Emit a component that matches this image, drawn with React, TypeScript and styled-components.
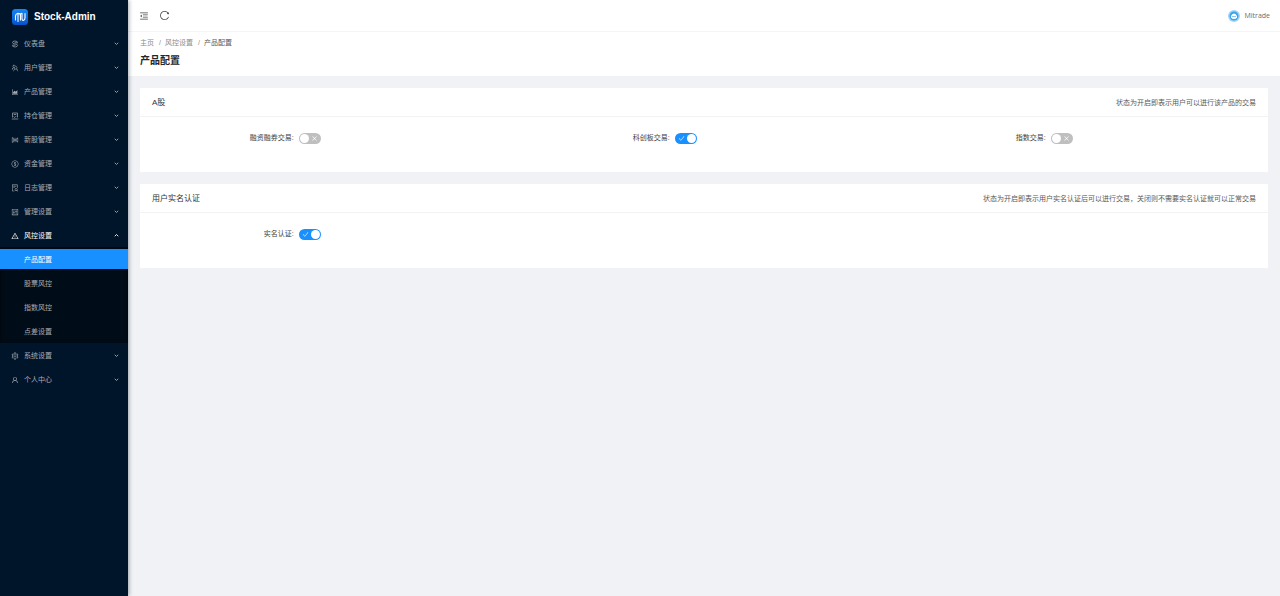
import React, { useState } from 'react';
import styled, { createGlobalStyle, css } from 'styled-components';
import {
  AiOutlineAreaChart,
  AiOutlineCheck,
  AiOutlineClose,
  AiOutlineControl,
  AiOutlineDollar,
  AiOutlineFileSearch,
  AiOutlineMenuFold,
  AiOutlineReload,
  AiOutlineSetting,
  AiOutlineSliders,
  AiOutlineTeam,
  AiOutlineUser,
  AiOutlineWarning,
} from 'react-icons/ai';
import type { IconType } from 'react-icons';

const GlobalStyle = createGlobalStyle`
  * { box-sizing: border-box; }
  body {
    margin: 0;
    background: #f0f2f5;
    color: #414141;
    font: 7px/12px "Liberation Sans", "Noto Sans CJK SC", sans-serif;
  }
  h1, h2, p, ul, ol { margin: 0; padding: 0; }
  ul, ol { list-style: none; }
  button { font: inherit; color: inherit; border: 0; padding: 0; background: none; cursor: pointer; }
  a { color: inherit; text-decoration: none; }
  svg { display: block; flex: none; }
`;

const Page = styled.div`
  display: flex;
  min-height: 100vh;
`;

const Sidebar = styled.aside`
  position: relative;
  flex: none;
  width: 128px;
  background: #001529;
  color: #a6adb4;
  box-shadow: 1px 0 4px rgba(0, 21, 41, 0.35);
`;

const Brand = styled.a`
  display: flex;
  align-items: center;
  gap: 6px;
  height: 31px;
  padding: 2px 0 0 12px;
  color: #fff;
  font-size: 10px;
  font-weight: 700;
`;

const MenuItem = styled.li`
  display: flow-root;
`;

const MenuButton = styled.button<{ $open?: boolean }>`
  display: flex;
  align-items: center;
  gap: 5px;
  width: 100%;
  height: 20px;
  margin: 2px 0;
  padding: 1px 9px 0 11px;
  text-align: left;
  ${({ $open }) => $open && css`color: #fff;`}
`;

const MenuLabel = styled.span`
  flex: 1;
`;

const SubMenu = styled.ul`
  background: #000c17;
  box-shadow: inset 0 1px 4px rgba(0, 0, 0, 0.45);
`;

const SubLink = styled.a<{ $active?: boolean }>`
  display: block;
  height: 20px;
  margin: 2px 0;
  padding: 1px 0 0 24px;
  line-height: 20px;
  ${({ $active }) => $active && css`background: #1890ff; color: #fff;`}
`;

const Main = styled.div`
  flex: 1;
  min-width: 0;
`;

const TopBar = styled.header`
  display: flex;
  align-items: center;
  gap: 10px;
  height: 32px;
  padding: 0 10px 0 11px;
  background: #fff;
  border-bottom: 1px solid #f4f5f7;
  color: #434343;
`;

const Account = styled.button`
  display: flex;
  align-items: center;
  gap: 4px;
  margin-left: auto;
`;

const UserName = styled.span`
  font-family: "Open Sans", sans-serif;
  color: #6b6b6b;
`;

const PageHeader = styled.div`
  height: 44px;
  padding: 5px 12px 0;
  background: #fff;
`;

const Crumbs = styled.ol`
  display: flex;
  color: #8c8c8c;
  li + li::before { content: "/"; margin: 0 4px 0 5px; }
  li:last-child { color: #595959; }
  li:last-child::before { color: #8c8c8c; }
`;

const Title = styled.h1`
  margin-top: 4px;
  font-size: 10px;
  line-height: 16px;
  font-weight: 700;
  color: #262626;
`;

const Content = styled.main`
  display: grid;
  gap: 12px;
  padding: 12px;
`;

const Card = styled.section`
  background: #fff;
  border-radius: 1px;
`;

const CardHead = styled.div`
  display: flex;
  align-items: center;
  justify-content: space-between;
  height: 29px;
  padding: 2px 12px 0;
  border-bottom: 1px solid #f3f3f4;
`;

const CardTitle = styled.h2`
  font-size: 8px;
  font-weight: 400;
  color: #333;
`;

const CardNote = styled.p`
  color: #595959;
`;

const CardBody = styled.div`
  display: grid;
  grid-template-columns: repeat(3, 1fr);
  gap: 24px;
  padding: 11px 12px 24px;
`;

const Field = styled.label`
  display: grid;
  grid-template-columns: 10fr 14fr;
  align-items: center;
  height: 20px;
`;

const FieldLabel = styled.span`
  padding-right: 5px;
  text-align: right;
  white-space: nowrap;
`;

const Track = styled.span<{ $on: boolean }>`
  position: relative;
  display: flex;
  align-items: center;
  justify-content: ${({ $on }) => ($on ? 'flex-start' : 'flex-end')};
  width: 22px;
  height: 11px;
  padding: 0 3px;
  border-radius: 6px;
  background: ${({ $on }) => ($on ? '#1890ff' : '#bfbfbf')};
  color: #fff;
  &::after {
    content: "";
    position: absolute;
    top: 1px;
    ${({ $on }) => ($on ? 'right' : 'left')}: 1px;
    width: 9px;
    height: 9px;
    border-radius: 50%;
    background: #fff;
  }
`;

const TrackInput = styled.input`
  position: absolute;
  inset: 0;
  width: 100%;
  height: 100%;
  margin: 0;
  opacity: 0;
  cursor: pointer;
`;

interface MenuEntry {
  label: string;
  icon: IconType;
  children?: string[];
}

const DashboardIcon: IconType = ({ size = 8 }) => (
  <svg width={size} height={size} viewBox="0 0 16 16" fill="none" stroke="currentColor" strokeWidth="1.4">
    <path d="M13 3.500Q10 2 7 2.200 3 2.500 3 5t4 2.800l3 .4q3 .6 3 2.800t-4 2.800Q6 14 3 12.500M14 5.500H7M9 10.500H2" />
  </svg>
);

const HoldingIcon: IconType = ({ size = 8 }) => (
  <svg width={size} height={size} viewBox="0 0 16 16" fill="none" stroke="currentColor" strokeWidth="1.4">
    <path d="M3 11V2h10v9M1.500 14h13M5.500 5h5M5 9l2.500 2L11 7.500" />
  </svg>
);

const Chevron = ({ up }: { up: boolean }) => (
  <svg width="5" height="5" viewBox="0 0 10 10" fill="none" stroke="currentColor" strokeWidth="1.8">
    <path d={up ? 'M1.500 6.500L5 3l3.500 3.500' : 'M1.500 3.500L5 7l3.500-3.500'} />
  </svg>
);

const menu: MenuEntry[] = [
  { label: '仪表盘', icon: DashboardIcon },
  { label: '用户管理', icon: AiOutlineTeam },
  { label: '产品管理', icon: AiOutlineAreaChart },
  { label: '持仓管理', icon: HoldingIcon },
  { label: '新股管理', icon: AiOutlineSliders },
  { label: '资金管理', icon: AiOutlineDollar },
  { label: '日志管理', icon: AiOutlineFileSearch },
  { label: '管理设置', icon: AiOutlineControl },
  { label: '风控设置', icon: AiOutlineWarning, children: ['产品配置', '股票风控', '指数风控', '点差设置'] },
  { label: '系统设置', icon: AiOutlineSetting },
  { label: '个人中心', icon: AiOutlineUser },
];

const Logo = () => (
  <svg width="16" height="16" viewBox="0 0 32 32" aria-hidden="true">
    <defs>
      <linearGradient id="logo" x1="0" y1="0" x2="0" y2="1">
        <stop offset="0" stopColor="#1687f5" />
        <stop offset="1" stopColor="#0552c9" />
      </linearGradient>
    </defs>
    <rect width="32" height="32" rx="7" fill="url(#logo)" />
    <path
      d="M7 22V14q0-4 5-5.500V25M12 8.500q5 0 5 5V22M17 11q0-2 3-2.500V19q0 4 2.500 4 3.500-1 3.500-5V9"
      fill="none"
      stroke="#fff"
      strokeWidth="2.200"
      strokeLinecap="round"
      strokeLinejoin="round"
    />
  </svg>
);

const Avatar = () => (
  <svg width="12" height="12" viewBox="0 0 24 24" aria-hidden="true">
    <circle cx="12" cy="12" r="12" fill="#a5d5f5" />
    <circle cx="12" cy="12" r="9" fill="#3ba4ec" />
    <path d="M6 12q2-5 6-5t6 5v3q-2 3-6 3t-6-3z" fill="#fff" />
    <path d="M8 12h8v2H8z" fill="#8cc8f2" />
  </svg>
);

function Toggle({ label, initial }: { label: string; initial: boolean }) {
  const [on, setOn] = useState(initial);
  return (
    <Field>
      <FieldLabel>{label}:</FieldLabel>
      <Track $on={on}>
        {on ? <AiOutlineCheck size={7} /> : <AiOutlineClose size={7} />}
        <TrackInput type="checkbox" role="switch" checked={on} onChange={() => setOn(!on)} />
      </Track>
    </Field>
  );
}

function Panel({ title, note, items }: { title: string; note: string; items: [string, boolean][] }) {
  return (
    <Card>
      <CardHead>
        <CardTitle>{title}</CardTitle>
        <CardNote>{note}</CardNote>
      </CardHead>
      <CardBody>
        {items.map(([label, on]) => (
          <Toggle key={label} label={label} initial={on} />
        ))}
      </CardBody>
    </Card>
  );
}

export default function App() {
  return (
    <Page>
      <GlobalStyle />
      <Sidebar>
        <Brand href="#">
          <Logo />
          Stock-Admin
        </Brand>
        <nav>
          <ul>
            {menu.map(({ label, icon: Icon, children }) => (
              <MenuItem key={label}>
                <MenuButton $open={!!children} aria-expanded={!!children}>
                  <Icon size={8} />
                  <MenuLabel>{label}</MenuLabel>
                  <Chevron up={!!children} />
                </MenuButton>
                {children && (
                  <SubMenu>
                    {children.map((child, i) => (
                      <MenuItem key={child}>
                        <SubLink href="#" $active={i === 0}>{child}</SubLink>
                      </MenuItem>
                    ))}
                  </SubMenu>
                )}
              </MenuItem>
            ))}
          </ul>
        </nav>
      </Sidebar>
      <Main>
        <TopBar>
          <button aria-label="收起菜单"><AiOutlineMenuFold size={10} /></button>
          <button aria-label="刷新"><AiOutlineReload size={11} /></button>
          <Account>
            <Avatar />
            <UserName>Mitrade</UserName>
          </Account>
        </TopBar>
        <PageHeader>
          <Crumbs>
            <li><a href="#">主页</a></li>
            <li><a href="#">风控设置</a></li>
            <li>产品配置</li>
          </Crumbs>
          <Title>产品配置</Title>
        </PageHeader>
        <Content>
          <Panel
            title="A股"
            note="状态为开启即表示用户可以进行该产品的交易"
            items={[['融资融券交易', false], ['科创板交易', true], ['指数交易', false]]}
          />
          <Panel
            title="用户实名认证"
            note="状态为开启即表示用户实名认证后可以进行交易，关闭则不需要实名认证就可以正常交易"
            items={[['实名认证', true]]}
          />
        </Content>
      </Main>
    </Page>
  );
}
